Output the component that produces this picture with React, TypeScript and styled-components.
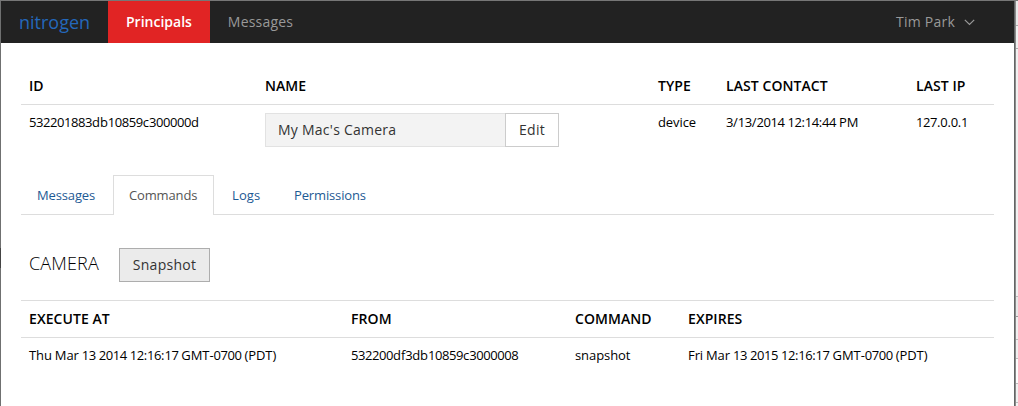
import React from "react";
import styled, { createGlobalStyle } from "styled-components";

const GlobalStyle = createGlobalStyle`
  *, *::before, *::after { box-sizing: border-box; }
  html, body { margin: 0; padding: 0; overflow: hidden; background: #fff; }
  body { font-family: "Open Sans", sans-serif; color: #000; font-size: 13px; }
`;

const Screen = styled.div`
  display: flex;
  width: 1018px;
  height: 406px;
  overflow: hidden;
  border-top: 1px solid #777;
`;

const LeftEdge = styled.div`
  width: 1px;
  padding-top: 247px;
  background: #6f7070;
`;

const LeftEdgeMark = styled.div`
  height: 20px;
  background: #444;
`;

const RightEdge = styled.div`
  width: 2px;
  border-left: 1px solid #636565;
  background: #8b8c8c;
`;

const Window = styled.div`
  width: 1013px;
  background: #fff;
`;

const Backdrop = styled.div`
  flex: 1;
  background: #f4f4f4;
`;

const BackdropRow = styled.div<{ $h: number; $bg: string; $line?: string }>`
  height: ${(p) => p.$h}px;
  border-bottom: 1px solid ${(p) => p.$line ?? "#bcbcbc"};
  background: ${(p) => p.$bg};
`;

const Navbar = styled.nav`
  display: flex;
  align-items: center;
  height: 42px;
  background: #222;
`;

const Brand = styled.a`
  width: 107px;
  padding-left: 18px;
  font-size: 18px;
  line-height: 42px;
  color: #2468bb;
`;

const NavItem = styled.a<{ $active?: boolean }>`
  padding: 0 18px;
  font-size: 14px;
  line-height: 42px;
  font-weight: ${(p) => (p.$active ? 600 : 400)};
  letter-spacing: ${(p) => (p.$active ? 0 : 0.2)}px;
  color: ${(p) => (p.$active ? "#fff" : "#999")};
  background: ${(p) => (p.$active ? "#e12424" : "transparent")};
`;

const UserMenu = styled.a`
  display: flex;
  align-items: center;
  gap: 9px;
  margin-left: auto;
  margin-right: 39px;
  font-size: 14px;
  letter-spacing: 0.22px;
  line-height: 42px;
  color: #999;
`;

const Content = styled.main`
  padding: 25px 20px 0;
`;

const Table = styled.div<{ $columns: string; $ruled?: boolean }>`
  display: grid;
  grid-template-columns: ${(p) => p.$columns};
  border-top: ${(p) => (p.$ruled ? "1px solid #ddd" : "0")};
`;

const HeadCell = styled.div`
  height: 37px;
  padding-left: 8px;
  border-bottom: 1px solid #ddd;
  font-size: 14px;
  font-weight: 600;
  letter-spacing: 0.07px;
  line-height: 36px;
  white-space: nowrap;
`;

const Cell = styled.div`
  padding: 8px 0 0 8px;
  white-space: nowrap;
`;

const CellText = styled.div`
  margin-top: -1px;
  line-height: 20px;
  letter-spacing: -0.08px;
  word-spacing: -0.35px;
`;

const Digits = styled.span`
  letter-spacing: -0.43px;
`;

const NameEditor = styled.div`
  display: flex;
  width: 294px;
  height: 34px;
  font-size: 14px;
  color: #333;
`;

const NameField = styled.div`
  flex: 1;
  padding-left: 12px;
  border: 1px solid #e2e2e2;
  border-right: 0;
  background: #f3f3f3;
  letter-spacing: 0.25px;
  line-height: 32px;
`;

const Button = styled.button<{ $width: number; $filled?: boolean }>`
  width: ${(p) => p.$width}px;
  height: 34px;
  padding: 0;
  border: 1px solid ${(p) => (p.$filled ? "#adadad" : "#ccc")};
  background: ${(p) => (p.$filled ? "#ebebeb" : "#fff")};
  color: #333;
  font: 14px/32px "Open Sans", sans-serif;
  letter-spacing: 0.27px;
`;

const Tabs = styled.div`
  display: flex;
  height: 40px;
  margin-top: 28px;
  border-bottom: 1px solid #ddd;
`;

const Tab = styled.a<{ $width: number; $spacing?: number; $active?: boolean }>`
  width: ${(p) => p.$width}px;
  height: 40px;
  margin-right: 2px;
  padding-left: 15px;
  border: 1px solid ${(p) => (p.$active ? "#ddd" : "transparent")};
  border-bottom: 0;
  background: ${(p) => (p.$active ? "#fff" : "transparent")};
  color: ${(p) => (p.$active ? "#555" : "#1d5a94")};
  letter-spacing: ${(p) => p.$spacing ?? -0.14}px;
  line-height: 39px;
`;

const Panel = styled.section`
  display: flex;
  align-items: flex-start;
  gap: 20px;
  margin: 33px 0 18px;
  padding-left: 8px;
`;

const PanelTitle = styled.h2`
  width: 70px;
  margin: 0;
  font-size: 18px;
  font-weight: 300;
  letter-spacing: 0.15px;
  line-height: 31px;
  white-space: nowrap;
`;

/* Table text with runs of digits set slightly tighter than the words. */
function TextCell({ text }: { text: string }) {
  return (
    <Cell>
      <CellText>
        {text.split(/(\d+)/).map((run, i) => (i % 2 ? <Digits key={i}>{run}</Digits> : run))}
      </CellText>
    </Cell>
  );
}

export default function App() {
  return (
    <Screen>
      <GlobalStyle />
      <LeftEdge>
        <LeftEdgeMark />
      </LeftEdge>
      <Window>
        <Navbar>
          <Brand>nitrogen</Brand>
          <NavItem $active>Principals</NavItem>
          <NavItem>Messages</NavItem>
          <UserMenu>
            Tim Park
            <svg width="11" height="7" viewBox="0 0 11 7" fill="none" stroke="#999" strokeWidth="1.2">
              <path d="M0.8 0.8L5.5 5.5L10.2 0.8" />
            </svg>
          </UserMenu>
        </Navbar>
        <Content>
          <Table $columns="236px 393px 68px 190px 86px">
            <HeadCell>ID</HeadCell>
            <HeadCell>NAME</HeadCell>
            <HeadCell>TYPE</HeadCell>
            <HeadCell>LAST CONTACT</HeadCell>
            <HeadCell>LAST IP</HeadCell>
            <TextCell text="532201883db10859c300000d" />
            <Cell>
              <NameEditor>
                <NameField>My Mac's Camera</NameField>
                <Button $width={54}>Edit</Button>
              </NameEditor>
            </Cell>
            <TextCell text="device" />
            <TextCell text="3/13/2014 12:14:44 PM" />
            <TextCell text="127.0.0.1" />
          </Table>
          <Tabs>
            <Tab $width={90}>Messages</Tab>
            <Tab $width={101} $active>Commands</Tab>
            <Tab $width={60} $spacing={0.1}>Logs</Tab>
            <Tab $width={104}>Permissions</Tab>
          </Tabs>
          <Panel>
            <PanelTitle>CAMERA</PanelTitle>
            <Button $width={91} $filled>Snapshot</Button>
          </Panel>
          <Table $ruled $columns="322px 224px 113px 314px">
            <HeadCell>EXECUTE AT</HeadCell>
            <HeadCell>FROM</HeadCell>
            <HeadCell>COMMAND</HeadCell>
            <HeadCell>EXPIRES</HeadCell>
            <TextCell text="Thu Mar 13 2014 12:16:17 GMT-0700 (PDT)" />
            <TextCell text="532200df3db10859c3000008" />
            <TextCell text="snapshot" />
            <TextCell text="Fri Mar 13 2015 12:16:17 GMT-0700 (PDT)" />
          </Table>
        </Content>
      </Window>
      <RightEdge />
      <Backdrop>
        <BackdropRow $h={25} $bg="#e8e8e8" $line="#aaa" />
        <BackdropRow $h={23} $bg="#f0f0f0" $line="#aaa" />
        <BackdropRow $h={248} $bg="#f1f1f1" />
        <BackdropRow $h={20} $bg="#e8e8e8" $line="#999" />
        <BackdropRow $h={23} $bg="#efefef" />
        <BackdropRow $h={19} $bg="#efefef" />
        <BackdropRow $h={25} $bg="#fcfcfc" />
        <BackdropRow $h={19} $bg="#f1f1f1" />
      </Backdrop>
    </Screen>
  );
}
